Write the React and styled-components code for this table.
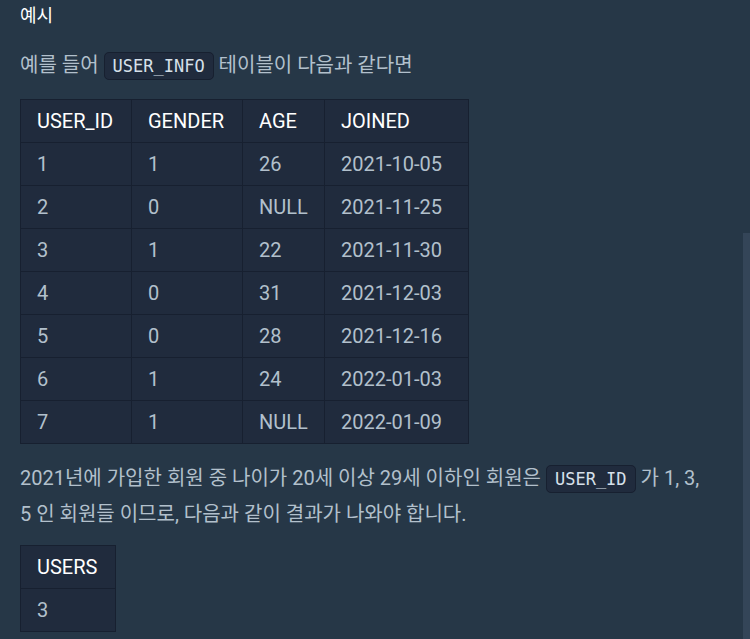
import React from "react";
import styled, { createGlobalStyle } from "styled-components";

const userInfo = [
  ["1", "1", "26", "2021-10-05"],
  ["2", "0", "NULL", "2021-11-25"],
  ["3", "1", "22", "2021-11-30"],
  ["4", "0", "31", "2021-12-03"],
  ["5", "0", "28", "2021-12-16"],
  ["6", "1", "24", "2022-01-03"],
  ["7", "1", "NULL", "2022-01-09"],
];

const App = () => {
  return (
    <>
      <GlobalStyle />
      <Page>
        <Title>예시</Title>
        <Para>
          예를 들어 <Code>USER_INFO</Code> 테이블이 다음과 같다면
        </Para>

        <Table>
          <thead>
            <tr>
              <Th $w={111}>USER_ID</Th>
              <Th $w={111}>GENDER</Th>
              <Th $w={82}>AGE</Th>
              <Th $w={144}>JOINED</Th>
            </tr>
          </thead>
          <tbody>
            {userInfo.map((row) => (
              <tr key={row[0]}>
                {row.map((cell, i) => (
                  <Td key={i}>{cell}</Td>
                ))}
              </tr>
            ))}
          </tbody>
        </Table>

        <Para $tall>
          2021년에 가입한 회원 중 나이가 20세 이상 29세 이하인 회원은 <Code>USER_ID</Code> 가 1, 3,
          5 인 회원들 이므로, 다음과 같이 결과가 나와야 합니다.
        </Para>

        <Table>
          <thead>
            <tr>
              <Th $w={95}>USERS</Th>
            </tr>
          </thead>
          <tbody>
            <tr>
              <Td>3</Td>
            </tr>
          </tbody>
        </Table>
      </Page>
      <ScrollThumb />
    </>
  );
};

export default App;

// ---------------- Styled Components ----------------
const GlobalStyle = createGlobalStyle`
  html, body {
    margin: 0;
    padding: 0;
    background: #263747;
    overflow: hidden;
  }
  * { box-sizing: border-box; }
`;

const Page = styled.div`
  width: 743px;
  height: 639px;
  padding: 0 20px;
  font-family: Roboto, "Noto Sans CJK KR", sans-serif;
  color: #b2c0cc;
  font-size: 20px;
`;

const Title = styled.h5`
  margin: 0;
  padding-top: 3px;
  font-size: 18px;
  font-weight: 400;
  line-height: 26px;
  color: #ffffff;
`;

const Para = styled.p`
  margin: ${({ $tall }) => ($tall ? "17px 0 13px" : "21px 0 18px")};
  line-height: ${({ $tall }) => ($tall ? "35px" : "30px")};
  width: 692px;
`;

const Code = styled.code`
  font-family: "DejaVu Sans Mono", monospace;
  font-size: 17px;
  color: #d6e0ea;
  background: #202b3d;
  border: 1px solid #172030;
  border-radius: 5px;
  padding: 3px 8px;
`;

const Table = styled.table`
  border-collapse: collapse;
  background: #202b3d;
  border: 1px solid #172030;
`;

const Th = styled.th`
  width: ${({ $w }) => $w}px;
  height: 43px;
  padding: 0 16px;
  text-align: left;
  font-weight: 400;
  color: #ffffff;
  border: 1px solid #172030;
`;

const Td = styled.td`
  height: 43px;
  padding: 0 16px;
  color: #b2c0cc;
  border: 1px solid #172030;
`;

const ScrollThumb = styled.div`
  position: fixed;
  right: 0;
  top: 233px;
  width: 7px;
  height: 406px;
  background: #344558;
`;
